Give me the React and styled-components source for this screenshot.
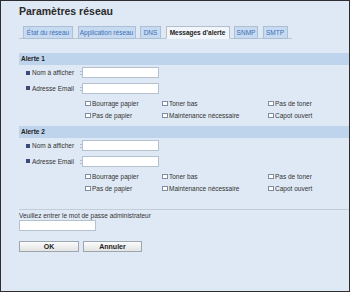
import React from "react";
import styled, { createGlobalStyle } from "styled-components";

const GlobalStyle = createGlobalStyle`
  html, body { margin: 0; padding: 0; }
  body { font-family: "Liberation Sans", Arial, sans-serif; }
`;

const Page = styled.div`
  box-sizing: border-box;
  width: 350px;
  height: 292px;
  border: 1px solid #2e2e2e;
  background: #dfe9f5;
  padding-top: 4px;
  color: #333;
  overflow: hidden;
`;

const Title = styled.h1`
  margin: 0 0 0 18px;
  font-size: 10.5px;
  line-height: 12px;
  font-weight: bold;
  color: #2a2a2a;
`;

const TabBar = styled.div`
  display: flex;
  gap: 4.5px;
  box-sizing: border-box;
  width: 273px;
  margin: 9px 0 0 18px;
  padding-left: 4px;
  border-bottom: 1px solid #b9c6d4;
`;

const Tab = styled.div`
  box-sizing: border-box;
  width: ${(p) => p.w}px;
  height: 13px;
  margin-bottom: -1px;
  border: 1px solid ${(p) => (p.active ? "#b3bfcc" : "#aebfd2")};
  border-bottom-color: ${(p) => (p.active ? "#f2f6fb" : "#aebfd2")};
  background: ${(p) => (p.active ? "#f2f6fb" : "#c6dbf1")};
  color: ${(p) => (p.active ? "#222" : "#3f6db3")};
  font-size: 6.5px;
  font-weight: ${(p) => (p.active ? "bold" : "normal")};
  line-height: 11px;
  text-align: center;
  white-space: nowrap;
`;

const Section = styled.div`
  margin-top: ${(p) => p.top}px;
`;

const Band = styled.div`
  height: 12px;
  margin-left: 18px;
  padding-left: 2px;
  background: #bdd4ec;
  color: #222;
  font-size: 6.5px;
  font-weight: bold;
  line-height: 12px;
`;

const FieldRow = styled.div`
  display: flex;
  align-items: center;
  height: 15.5px;
  padding-left: 25px;
  font-size: 6.5px;
`;

const Bullet = styled.span`
  width: 4px;
  height: 4px;
  margin-right: 2px;
  background: #3b4a7c;
`;

const Label = styled.span`
  width: 48px;
  white-space: nowrap;
`;

const Colon = styled.span`
  width: 2px;
`;

const TextInput = styled.input`
  display: block;
  box-sizing: border-box;
  width: ${(p) => p.w || 77}px;
  height: 11px;
  margin: 0;
  padding: 0 2px;
  border: 1px solid #b4c2d0;
  background: #fff;
  font-size: 6.5px;
`;

const CheckGrid = styled.div`
  display: grid;
  grid-template-columns: 77px 106px auto;
  grid-auto-rows: 12px;
  margin: 1.5px 0 0 84px;
  font-size: 6.5px;
`;

const CheckItem = styled.label`
  display: flex;
  align-items: center;
  gap: 1.5px;
  white-space: nowrap;
`;

const Box = styled.input`
  appearance: none;
  box-sizing: border-box;
  width: 5.5px;
  height: 5.5px;
  margin: 0;
  border: 1px solid #7d8ea3;
  background: #fff;
`;

const Footer = styled.div`
  margin: 14px 0 0 18px;
  border-top: 1px solid #c3cdd8;
`;

const Prompt = styled.div`
  margin-top: 2px;
  font-size: 6.5px;
  line-height: 8px;
`;

const Buttons = styled.div`
  display: flex;
  gap: 4px;
  margin-top: 10.5px;
`;

const Button = styled.button`
  box-sizing: border-box;
  width: ${(p) => p.w}px;
  height: 11px;
  padding: 0;
  border: 1px solid #9ea6ae;
  background: linear-gradient(#fbfbfb, #e3e3e3);
  color: #222;
  font-family: inherit;
  font-size: 7px;
  font-weight: bold;
  line-height: 9px;
`;

const tabs = [
  { name: "État du réseau", w: 50 },
  { name: "Application réseau", w: 58 },
  { name: "DNS", w: 21 },
  { name: "Messages d'alerte", w: 64, active: true },
  { name: "SNMP", w: 24 },
  { name: "SMTP", w: 25 },
];

const checks = [
  "Bourrage papier",
  "Toner bas",
  "Pas de toner",
  "Pas de papier",
  "Maintenance nécessaire",
  "Capot ouvert",
];

const Alert = ({ title, top }) => (
  <Section top={top}>
    <Band>{title}</Band>
    <FieldRow>
      <Bullet />
      <Label>Nom à afficher</Label>
      <Colon>:</Colon>
      <TextInput />
    </FieldRow>
    <FieldRow>
      <Bullet />
      <Label>Adresse Email</Label>
      <Colon>:</Colon>
      <TextInput />
    </FieldRow>
    <CheckGrid>
      {checks.map((c) => (
        <CheckItem key={c}>
          <Box type="checkbox" />
          {c}
        </CheckItem>
      ))}
    </CheckGrid>
  </Section>
);

export default function App() {
  return (
    <Page>
      <GlobalStyle />
      <Title>Paramètres réseau</Title>
      <TabBar>
        {tabs.map((t) => (
          <Tab key={t.name} w={t.w} active={t.active}>
            {t.name}
          </Tab>
        ))}
      </TabBar>
      <Alert title="Alerte 1" top={14} />
      <Alert title="Alerte 2" top={4.5} />
      <Footer>
        <Prompt>Veuillez entrer le mot de passe administrateur</Prompt>
        <TextInput w={77} type="password" />
        <Buttons>
          <Button w={60}>OK</Button>
          <Button w={59}>Annuler</Button>
        </Buttons>
      </Footer>
    </Page>
  );
}
